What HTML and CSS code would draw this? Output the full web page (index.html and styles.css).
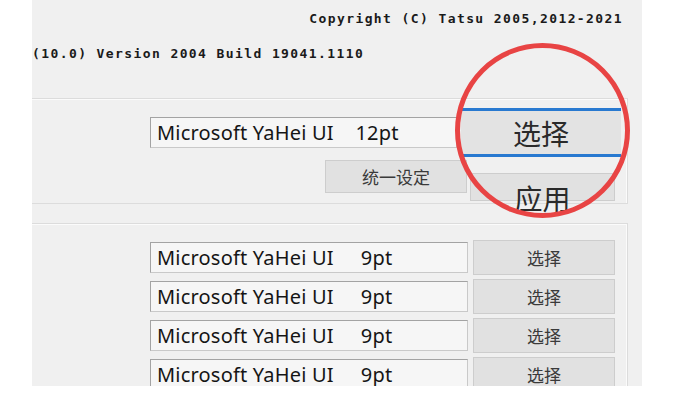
FILE: index.html
```html
<!DOCTYPE html>
<html lang="zh-CN">
<head>
    <meta charset="UTF-8">
    <title>字体设置</title>
    <link rel="stylesheet" href="styles.css">
</head>
<body>
    <div class="window">
        <div class="about">
            <p class="copyright">Copyright (C) Tatsu 2005,2012-2021</p>
            <p class="version">(10.0) Version 2004 Build 19041.1110</p>
        </div>

        <div class="group group-main">
            <div class="row row-main">
                <div class="font-field">Microsoft YaHei UI    12pt</div>
                <button class="btn btn-zoom">选择</button>
            </div>
            <div class="row row-actions">
                <button class="btn btn-unify">统一设定</button>
                <button class="btn btn-apply">应用</button>
            </div>
        </div>

        <div class="group group-items">
            <div class="row item">
                <div class="font-field">Microsoft YaHei UI     9pt</div>
                <button class="btn btn-pick">选择</button>
            </div>
            <div class="row item">
                <div class="font-field">Microsoft YaHei UI     9pt</div>
                <button class="btn btn-pick">选择</button>
            </div>
            <div class="row item">
                <div class="font-field">Microsoft YaHei UI     9pt</div>
                <button class="btn btn-pick">选择</button>
            </div>
            <div class="row item">
                <div class="font-field">Microsoft YaHei UI     9pt</div>
                <button class="btn btn-pick">选择</button>
            </div>
        </div>

        <!-- red annotation ring -->
        <div class="highlight"></div>
    </div>
</body>
</html>
```

FILE: styles.css
```css
* {
    box-sizing: border-box;
}
body {
    margin: 0;
    background: #fff;
    font-family: "Noto Sans", "Noto Sans CJK SC", sans-serif;
}
.window {
    position: relative;
    margin-left: 32px;
    width: 610px;
    height: 386px;
    background: #f0f0f0;
    overflow: hidden;
}
.about {
    padding-top: 11px;
}
.about p {
    margin: 0;
    font-family: "DejaVu Sans Mono", monospace;
    font-weight: bold;
    font-size: 13px;
    line-height: 16px;
    letter-spacing: 1.4px;
    color: #1a1a1a;
    white-space: nowrap;
}
.copyright {
    text-align: right;
    padding-right: 19px;
}
.version {
    margin-top: 19px !important;
}
.group {
    margin-right: 14px;
    border-top: 1px solid #dcdcdc;
    border-right: 1px solid #dcdcdc;
    border-bottom: 1px solid #dcdcdc;
    box-shadow: inset 0 1px 0 #fbfbfb, inset -1px 0 0 #fbfbfb;
}
.group-main {
    margin-top: 36px;
    padding: 9px 0 2px;
}
.group-items {
    margin-top: 19px;
    padding-top: 16px;
    border-bottom: none;
}
.row {
    display: flex;
    justify-content: flex-end;
    align-items: center;
}
.font-field {
    height: 31px;
    padding-left: 6px;
    background: #f6f6f6;
    border: 1px solid #a3a3a3;
    border-right-color: #c9c9c9;
    border-bottom-color: #c9c9c9;
    font-size: 20px;
    line-height: 29px;
    letter-spacing: 0.2px;
    color: #151515;
    white-space: pre;
    overflow: hidden;
}
.btn {
    padding: 0;
    background: #e1e1e1;
    border: 1px solid #cdcdcd;
    font-family: "Noto Sans CJK SC", sans-serif;
    font-size: 17px;
    color: #3a3a3a;
}
.row-main .font-field {
    width: 307px;
    margin-right: 4px;
}
.btn-zoom {
    width: 160px;
    height: 49px;
    margin-right: 6px;
    border: none;
    border-top: 3px solid #2879d0;
    border-bottom: 3px solid #2879d0;
    background: #e3e3e3;
    font-size: 28px;
    line-height: 1;
    color: #2a2a2a;
}
.row-actions {
    margin-top: 3px;
    align-items: flex-start;
}
.btn-unify {
    width: 142px;
    height: 33px;
    margin-right: 3px;
}
.btn-apply {
    width: 145px;
    height: 28px;
    margin-top: 13px;
    margin-right: 12px;
    padding-top: 10px;
    overflow: visible;
    font-size: 28px;
    line-height: 28px;
    color: #2a2a2a;
}
.item {
    height: 35px;
    margin-bottom: 4px;
}
.item .font-field {
    width: 318px;
    margin-right: 5px;
}
.btn-pick {
    width: 142px;
    height: 35px;
    margin-right: 12px;
}
.highlight {
    position: absolute;
    left: 423px;
    top: 43px;
    width: 175px;
    height: 175px;
    border: 5px solid #e84444;
    border-radius: 50%;
    pointer-events: none;
}
```
